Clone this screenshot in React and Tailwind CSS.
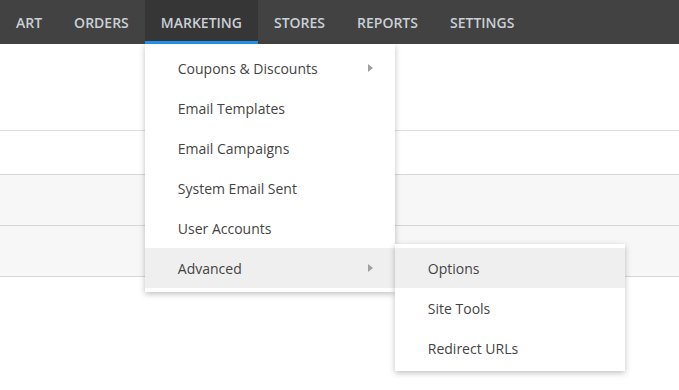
import React from "react";

const navItems = ["Art", "Orders", "Marketing", "Stores", "Reports", "Settings"];

const marketingItems = [
  { label: "Coupons & Discounts", sub: true },
  { label: "Email Templates" },
  { label: "Email Campaigns" },
  { label: "System Email Sent" },
  { label: "User Accounts" },
  { label: "Advanced", sub: true, active: true },
];

const advancedItems = [
  { label: "Options", active: true },
  { label: "Site Tools" },
  { label: "Redirect URLs" },
];

function Caret() {
  return (
    <svg width="5" height="8" viewBox="0 0 5 8" className="shrink-0">
      <path d="M0 0 L5 4 L0 8 Z" fill="#a0a0a0" />
    </svg>
  );
}

function MenuItem({ item }) {
  return (
    <div
      className={`h-10 flex items-center justify-between pl-[33px] pr-[22px] text-[14px] text-[#444] ${
        item.active ? "bg-[#efefef]" : ""
      }`}
    >
      <span>{item.label}</span>
      {item.sub && <Caret />}
    </div>
  );
}

export default function App() {
  return (
    <div className="w-[679px] h-[390px] bg-white overflow-hidden relative font-['Open_Sans',sans-serif]">
      {/* Top navigation */}
      <nav className="h-11 bg-[#424242] flex">
        {navItems.map((name) => {
          const active = name === "Marketing";
          return (
            <div key={name} className="relative">
              <div
                className={`h-11 px-4 flex items-center text-[14px] font-semibold uppercase text-[#c9d0d6] ${
                  active ? "bg-[#363636] border-b-[3px] border-[#2196f3] pt-[3px]" : ""
                }`}
              >
                {name}
              </div>

              {active && (
                <div className="absolute left-0 top-11 w-[250px] bg-white shadow-[0_2px_6px_rgba(0,0,0,0.25)] pt-1 pb-1 z-10">
                  {marketingItems.map((item) => (
                    <div key={item.label} className="relative">
                      <MenuItem item={item} />
                      {item.label === "Advanced" && (
                        <div className="absolute left-full top-[-4px] w-[230px] bg-white shadow-[0_2px_6px_rgba(0,0,0,0.25)] pt-1 pb-[3px]">
                          {advancedItems.map((sub) => (
                            <MenuItem key={sub.label} item={sub} />
                          ))}
                        </div>
                      )}
                    </div>
                  ))}
                </div>
              )}
            </div>
          );
        })}
      </nav>

      {/* Page content rows behind the menus */}
      <div className="h-[87px] border-b border-[#e0e0e0]" />
      <div className="h-[44px] border-b border-[#d6d6d6]" />
      <div className="h-[51px] bg-[#f7f7f7] border-b border-[#d6d6d6]" />
      <div className="h-[51px] bg-[#f7f7f7] border-b border-[#d6d6d6]" />
    </div>
  );
}
